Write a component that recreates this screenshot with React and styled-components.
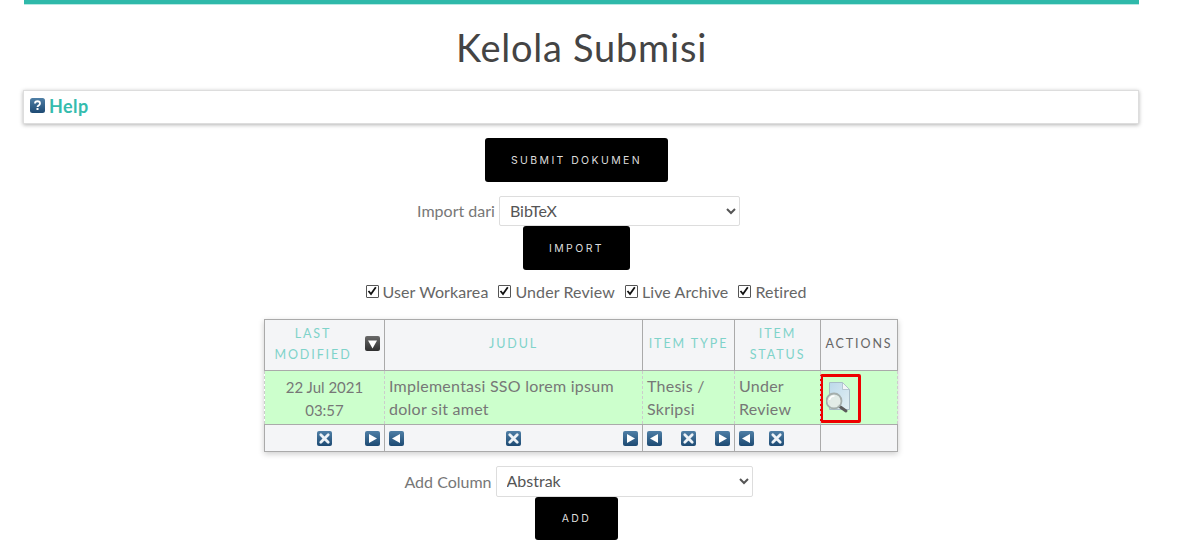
import React from "react";
import styled, { createGlobalStyle } from "styled-components";

const Global = createGlobalStyle`
  html, body { margin: 0; padding: 0; background: #fff; overflow: hidden; }
  body { font-family: "Lato", "Open Sans", sans-serif; color: #555; }
`;

const Page = styled.div`
  width: 1115px;
  margin-left: 24px;
  display: flex;
  flex-direction: column;
  align-items: center;
  height: 559px;
`;
const TopRule = styled.div`
  align-self: stretch;
  height: 4px;
  background: #2fb9aa;
  border-bottom: 1px solid #b8e9e3;
`;
const Title = styled.h1`
  margin: 20px 0 0;
  height: 65px;
  font-size: 38px;
  line-height: 44px;
  font-weight: 400;
  letter-spacing: 0.75px;
  color: #444;
`;
const HelpBox = styled.div`
  align-self: stretch;
  box-sizing: border-box;
  height: 34px;
  margin-left: -1px;
  border: 1px solid #ddd;
  box-shadow: 0 1px 4px rgba(0, 0, 0, 0.3);
  display: flex;
  align-items: center;
  gap: 4px;
  padding: 0 0 3px 6px;
`;
const HelpLink = styled.a`
  font-size: 18px;
  font-weight: 700;
  letter-spacing: 0.4px;
  color: #35bcae;
`;
const BlackButton = styled.button`
  width: ${(p) => p.$w}px;
  height: ${(p) => p.$h || 44}px;
  margin-top: ${(p) => p.$top || 0}px;
  margin-left: -10px;
  border: 0;
  border-radius: 3px;
  background: #000;
  color: #ddd;
  font-family: "Inter", sans-serif;
  font-size: 10.5px;
  font-weight: 400;
  letter-spacing: 2.4px;
  text-transform: uppercase;
  padding: 0;
`;
const FormRow = styled.div`
  display: flex;
  align-items: center;
  gap: 4px;
  margin-top: ${(p) => p.$top}px;
  margin-left: -6px;
  font-size: 16px;
  color: #777;
`;
const FormLabel = styled.span`
  margin-bottom: ${(p) => p.$lift || 0}px;
`;
const Select = styled.select`
  width: ${(p) => p.$w}px;
  height: ${(p) => p.$h}px;
  box-sizing: border-box;
  border: 1px solid #ddd;
  border-radius: 2px;
  background: #fff;
  color: #555;
  padding: 0 6px 2px;
  font-family: "Lato", sans-serif;
  font-size: 16px;
`;
const Filters = styled.div`
  display: flex;
  gap: 10px;
  margin-top: 12px;
  height: 20px;
  margin-left: 9px;
`;
const Filter = styled.label`
  display: flex;
  align-items: center;
  gap: 4px;
  font-size: 16px;
  letter-spacing: 0.1px;
  color: #666;
  padding-bottom: 2px;
`;
const CheckBox = styled.span`
  width: 13px;
  height: 13px;
  box-sizing: border-box;
  border: 1.5px solid #555;
  border-radius: 1px;
  background: #fff;
  display: flex;
`;
const Table = styled.table`
  margin-top: 17px;
  margin-left: -1px;
  width: 633px;
  table-layout: fixed;
  border-collapse: collapse;
  box-shadow: 0 2px 6px rgba(0, 0, 0, 0.2);
`;
const HeadCell = styled.th`
  box-sizing: border-box;
  height: 51px;
  padding: 0 4px 3px;
  background: #f4f5f7;
  border: 1px solid #aaa;
  font-size: 12.5px;
  line-height: 21px;
  font-weight: 400;
  letter-spacing: 1.9px;
  text-transform: uppercase;
  color: ${(p) => (p.$plain ? "#666" : "#7fd3ca")};
`;
const HeadInner = styled.div`
  display: flex;
  align-items: center;
  justify-content: space-between;
`;
const HeadLabel = styled.span`
  flex: 1;
  text-align: center;
  padding-right: 8px;
`;
const DataRow = styled.tr`
  background: #ccffcc;
`;
const DataCell = styled.td`
  height: 54px;
  padding: 0 4px 1px;
  box-sizing: border-box;
  border: 1px dashed #ccc;
  border-top: 1px solid #aaa;
  border-bottom: 1px solid #aaa;
  line-height: 23px;
  font-size: 16px;
  letter-spacing: 0.25px;
  color: #777;
  vertical-align: middle;
`;
const DateCell = styled(DataCell)`
  padding: 2px 4px 0;
  font-size: 15px;
  letter-spacing: 0;
  text-align: center;
`;
const ActionCell = styled(DataCell)`
  padding: 0 4px;
  vertical-align: top;
`;
const FootCell = styled.td`
  height: 25px;
  padding: 1px 4px 0;
  background: #f4f5f7;
  border: 1px solid #aaa;
`;
const FootInner = styled.div`
  display: flex;
  align-items: center;
  justify-content: ${(p) => p.$justify || "space-between"};
  gap: ${(p) => p.$gap || 0}px;
`;
const Spacer = styled.span`
  width: 15px;
`;
const ActionFrame = styled.span`
  display: block;
  box-sizing: border-box;
  width: 41px;
  height: 49px;
  margin: 3px 0 0 -5px;
  border: 3px solid #ee0000;
  border-radius: 2px;
  padding: 3px 0 0 3px;
`;

const Glyph = ({ children, dark }) => (
  <svg width="15" height="15" viewBox="0 0 15 15" style={{ flex: "none", display: "block" }}>
    <defs>
      <linearGradient id={dark ? "gd" : "gb"} x1="0" y1="0" x2="0" y2="1">
        <stop offset="0" stopColor={dark ? "#6a6a6a" : "#4f7fa6"} />
        <stop offset="1" stopColor={dark ? "#2f2f2f" : "#1d4a73"} />
      </linearGradient>
    </defs>
    <rect width="15" height="15" rx="2" fill={`url(#${dark ? "gd" : "gb"})`} />
    {children}
  </svg>
);
const IconX = () => (
  <Glyph><path d="M3.800 3.800l7.400 7.400M11.200 3.800l-7.400 7.400" stroke="#eef3f7" strokeWidth="2.800" strokeLinecap="round" /></Glyph>
);
const IconRight = () => (
  <Glyph><path d="M4 3l8 4.500-8 4.500z" fill="#fff" /></Glyph>
);
const IconLeft = () => (
  <Glyph><path d="M11 3L3 7.500l8 4.500z" fill="#fff" /></Glyph>
);
const IconDown = () => (
  <Glyph dark><path d="M3 4.500h9l-4.500 8z" fill="#fff" /></Glyph>
);
const IconHelp = () => (
  <svg width="15" height="15" viewBox="0 0 15 15" style={{ flex: "none" }}>
    <defs>
      <linearGradient id="gh" x1="0" y1="0" x2="0" y2="1">
        <stop offset="0" stopColor="#4f7fa6" />
        <stop offset="1" stopColor="#1d4a73" />
      </linearGradient>
    </defs>
    <rect width="15" height="15" rx="2.500" fill="url(#gh)" />
    <path d="M5 5.500c0-3 5-3 5 0 0 2-2.500 1.800-2.500 3.500" fill="none" stroke="#fff" strokeWidth="1.800" />
    <rect x="6.500" y="10" width="2" height="2" fill="#fff" />
  </svg>
);
const Tick = () => (
  <svg width="10" height="10" viewBox="0 0 10 10">
    <path d="M1.500 5l2.500 3L8.800 1.200" fill="none" stroke="#111" strokeWidth="1.800" />
  </svg>
);
const PreviewIcon = () => (
  <svg width="28" height="38" viewBox="0 0 28 38" style={{ display: "block" }}>
    <defs>
      <linearGradient id="doc" x1="0" y1="0" x2="1" y2="1">
        <stop offset="0" stopColor="#bcd9ea" />
        <stop offset="1" stopColor="#e2eff3" />
      </linearGradient>
    </defs>
    <path d="M3.500 2.500h13l7 7v20h-20z" fill="url(#doc)" stroke="#a8bcc6" strokeWidth="1" />
    <path d="M16.500 2.500v7h7z" fill="#f3f7f8" stroke="#a8bcc6" strokeWidth="0.800" />
    <path d="M13 26l7 5" stroke="#5a5a5a" strokeWidth="3" strokeLinecap="round" />
    <circle cx="8" cy="21" r="7.500" fill="#e4ece6" fillOpacity="0.9" stroke="#a4aeac" strokeWidth="1.800" />
    <path d="M3.500 20c.5-3 2.500-4 5-4" fill="none" stroke="#fff" strokeWidth="1.500" />
  </svg>
);

const filters = ["User Workarea", "Under Review", "Live Archive", "Retired"];

export default function App() {
  return (
    <Page>
      <Global />
      <TopRule />
      <Title>Kelola Submisi</Title>
      <HelpBox>
        <IconHelp />
        <HelpLink>Help</HelpLink>
      </HelpBox>
      <BlackButton $w={183} $top={14}>Submit Dokumen</BlackButton>
      <FormRow $top={14}>
        <FormLabel $lift={2}>Import dari</FormLabel>
        <Select $w={241} $h={30} defaultValue="BibTeX">
          <option>BibTeX</option>
        </Select>
      </FormRow>
      <BlackButton $w={107}>Import</BlackButton>
      <Filters>
        {filters.map((f) => (
          <Filter key={f}>
            <CheckBox><Tick /></CheckBox>
            {f}
          </Filter>
        ))}
      </Filters>
      <Table>
        <colgroup>
          <col style={{ width: 120 }} />
          <col style={{ width: 258 }} />
          <col style={{ width: 92 }} />
          <col style={{ width: 86 }} />
          <col style={{ width: 77 }} />
        </colgroup>
        <thead>
          <tr>
            <HeadCell>
              <HeadInner>
                <HeadLabel>Last Modified</HeadLabel>
                <IconDown />
              </HeadInner>
            </HeadCell>
            <HeadCell>Judul</HeadCell>
            <HeadCell>Item Type</HeadCell>
            <HeadCell>Item Status</HeadCell>
            <HeadCell $plain>Actions</HeadCell>
          </tr>
        </thead>
        <tbody>
          <DataRow>
            <DateCell>22 Jul 2021 03:57</DateCell>
            <DataCell>Implementasi SSO lorem ipsum dolor sit amet</DataCell>
            <DataCell>Thesis / Skripsi</DataCell>
            <DataCell>Under Review</DataCell>
            <ActionCell>
              <ActionFrame><PreviewIcon /></ActionFrame>
            </ActionCell>
          </DataRow>
          <tr>
            <FootCell><FootInner><Spacer /><IconX /><IconRight /></FootInner></FootCell>
            <FootCell><FootInner><IconLeft /><IconX /><IconRight /></FootInner></FootCell>
            <FootCell><FootInner><IconLeft /><IconX /><IconRight /></FootInner></FootCell>
            <FootCell><FootInner $justify="flex-start" $gap={15}><IconLeft /><IconX /></FootInner></FootCell>
            <FootCell />
          </tr>
        </tbody>
      </Table>
      <FormRow $top={14}>
        <FormLabel>Add Column</FormLabel>
        <Select $w={257} $h={31} defaultValue="Abstrak">
          <option>Abstrak</option>
        </Select>
      </FormRow>
      <BlackButton $w={83} $h={43}>Add</BlackButton>
    </Page>
  );
}
